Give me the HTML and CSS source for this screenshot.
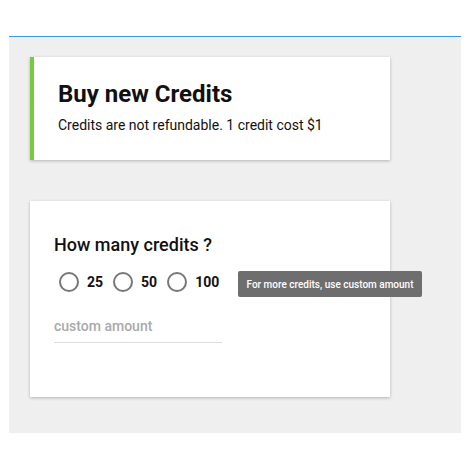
FILE: index.html
```html
<!DOCTYPE html>
<html>
<head>
<meta charset="utf-8">
<link rel="stylesheet" href="styles.css">
</head>
<body>
<div class="page">
  <div class="panel">
    <div class="card card-header">
      <h1 class="title">Buy new Credits</h1>
      <p class="subtitle">Credits are not refundable. 1 credit cost $1</p>
    </div>
    <div class="card card-form">
      <h2 class="question">How many credits ?</h2>
      <div class="radios">
        <label class="radio"><span class="circle"></span><span class="rlabel">25</span></label>
        <label class="radio"><span class="circle"></span><span class="rlabel">50</span></label>
        <label class="radio"><span class="circle"></span><span class="rlabel">100</span></label>
      </div>
      <div class="field"><span class="placeholder">custom amount</span></div>
      <div class="tooltip">For more credits, use custom amount</div>
    </div>
  </div>
</div>
</body>
</html>
```
FILE: styles.css
```css
html, body { margin: 0; padding: 0; background: #fff; }
body { font-family: Roboto, "Liberation Sans", sans-serif; color: #111; }
.page { padding: 36px 9px 0 9px; }
.panel {
  border-top: 1px solid #3b9be0;
  background: #efefef;
  height: 376px;
  padding: 20px 0 0 21px;
}
.card {
  width: 360px;
  background: #fff;
  box-shadow: 0 1px 3px rgba(0,0,0,0.25);
  box-sizing: border-box;
  position: relative;
}
.card-header {
  height: 103px;
  border-left: 4px solid #78c93f;
  padding: 23px 0 0 24px;
}
.title { margin: 0; font-size: 24px; font-weight: 700; line-height: 28px; color: #111; }
.subtitle { margin: 8px 0 0; font-size: 14px; line-height: 18px; color: #111; }
.card-form {
  margin-top: 41px;
  height: 196px;
  padding: 33px 0 0 24px;
}
.question { margin: 0; font-size: 18px; font-weight: 500; line-height: 22px; color: #111; }
.radios { display: flex; align-items: center; margin-top: 16px; padding-left: 5px; }
.radio { display: flex; align-items: center; margin-right: 10px; }
.circle {
  width: 16px; height: 16px; border: 2px solid #777; border-radius: 50%;
  display: inline-block;
}
.rlabel { font-size: 14px; font-weight: 700; margin-left: 8px; color: #111; }
.field {
  margin-top: 26px;
  width: 168px;
  border-bottom: 1px solid #ddd;
  padding-bottom: 8px;
}
.placeholder { font-size: 14px; font-weight: 500; color: #aaa; line-height: 16px; display: block; }
.tooltip {
  position: absolute;
  left: 208px; top: 70px;
  width: 184px; height: 26px;
  background: #6e6e6e;
  border-radius: 2px;
  color: #fff;
  font-size: 10px; font-weight: 500;
  display: flex; align-items: center; justify-content: center;
  box-sizing: border-box;
}
```
